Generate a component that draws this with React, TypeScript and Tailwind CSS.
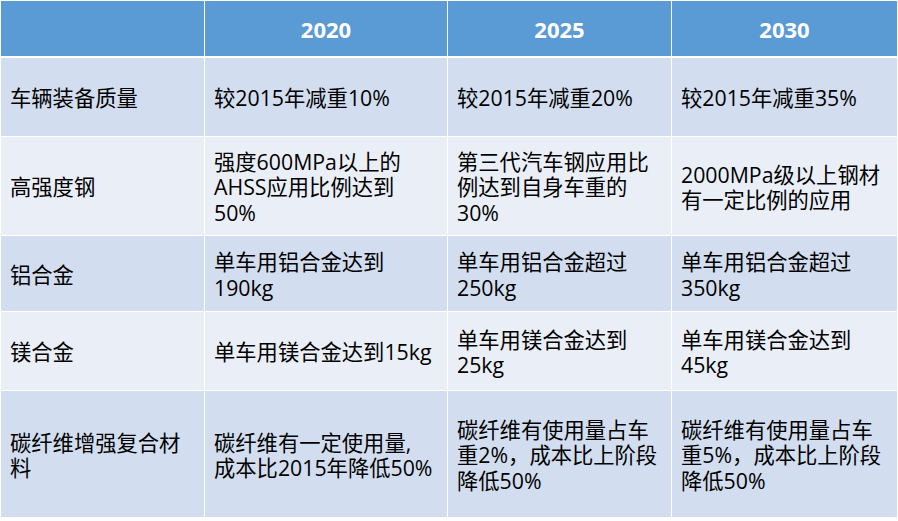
import React from "react";

const rows: { h: string; cells: string[][]; bg: string }[] = [
  { h: "78px", bg: "bg-[#D2DEEF]", cells: [["车辆装备质量"], ["较2015年减重10%"], ["较2015年减重20%"], ["较2015年减重35%"]] },
  { h: "98px", bg: "bg-[#EAEFF7]", cells: [["高强度钢"], ["强度600MPa以上的", "AHSS应用比例达到", "50%"], ["第三代汽车钢应用比", "例达到自身车重的", "30%"], ["2000MPa级以上钢材", "有一定比例的应用"]] },
  { h: "75px", bg: "bg-[#D2DEEF]", cells: [["铝合金"], ["单车用铝合金达到", "190kg"], ["单车用铝合金超过", "250kg"], ["单车用铝合金超过", "350kg"]] },
  { h: "78px", bg: "bg-[#EAEFF7]", cells: [["镁合金"], ["单车用镁合金达到15kg"], ["单车用镁合金达到", "25kg"], ["单车用镁合金达到", "45kg"]] },
  { h: "126px", bg: "bg-[#D2DEEF]", cells: [["碳纤维增强复合材", "料"], ["碳纤维有一定使用量,", "成本比2015年降低50%"], ["碳纤维有使用量占车", "重2%，成本比上阶段", "降低50%"], ["碳纤维有使用量占车", "重5%，成本比上阶段", "降低50%"]] },
];

const cols = "grid grid-cols-[203px_242px_223px_225px] gap-x-px";

export default function App() {
  return (
    <div
      className="w-[898px] h-[521px] bg-white pt-px pl-px text-black"
      style={{ fontFamily: '"Open Sans", "Noto Sans CJK SC", sans-serif' }}
    >
      <div className={`${cols} h-[55px] mb-[2px]`}>
        <div className="bg-[#5B9BD5]" />
        {["2020", "2025", "2030"].map((y) => (
          <div key={y} className="bg-[#5B9BD5] flex items-center justify-center text-white font-bold text-[22px] pt-px">
            {y}
          </div>
        ))}
      </div>
      {rows.map((r, i) => (
        <div key={i} className={`${cols} mb-px`} style={{ height: r.h }}>
          {r.cells.map((lines, j) => (
            <div key={j} className={`${r.bg} flex flex-col justify-center pl-[9px] pt-[2px] text-[21.3px] leading-[25.5px] whitespace-nowrap`}>
              {lines.map((l, k) => (
                <div key={k}>{l}</div>
              ))}
            </div>
          ))}
        </div>
      ))}
    </div>
  );
}
